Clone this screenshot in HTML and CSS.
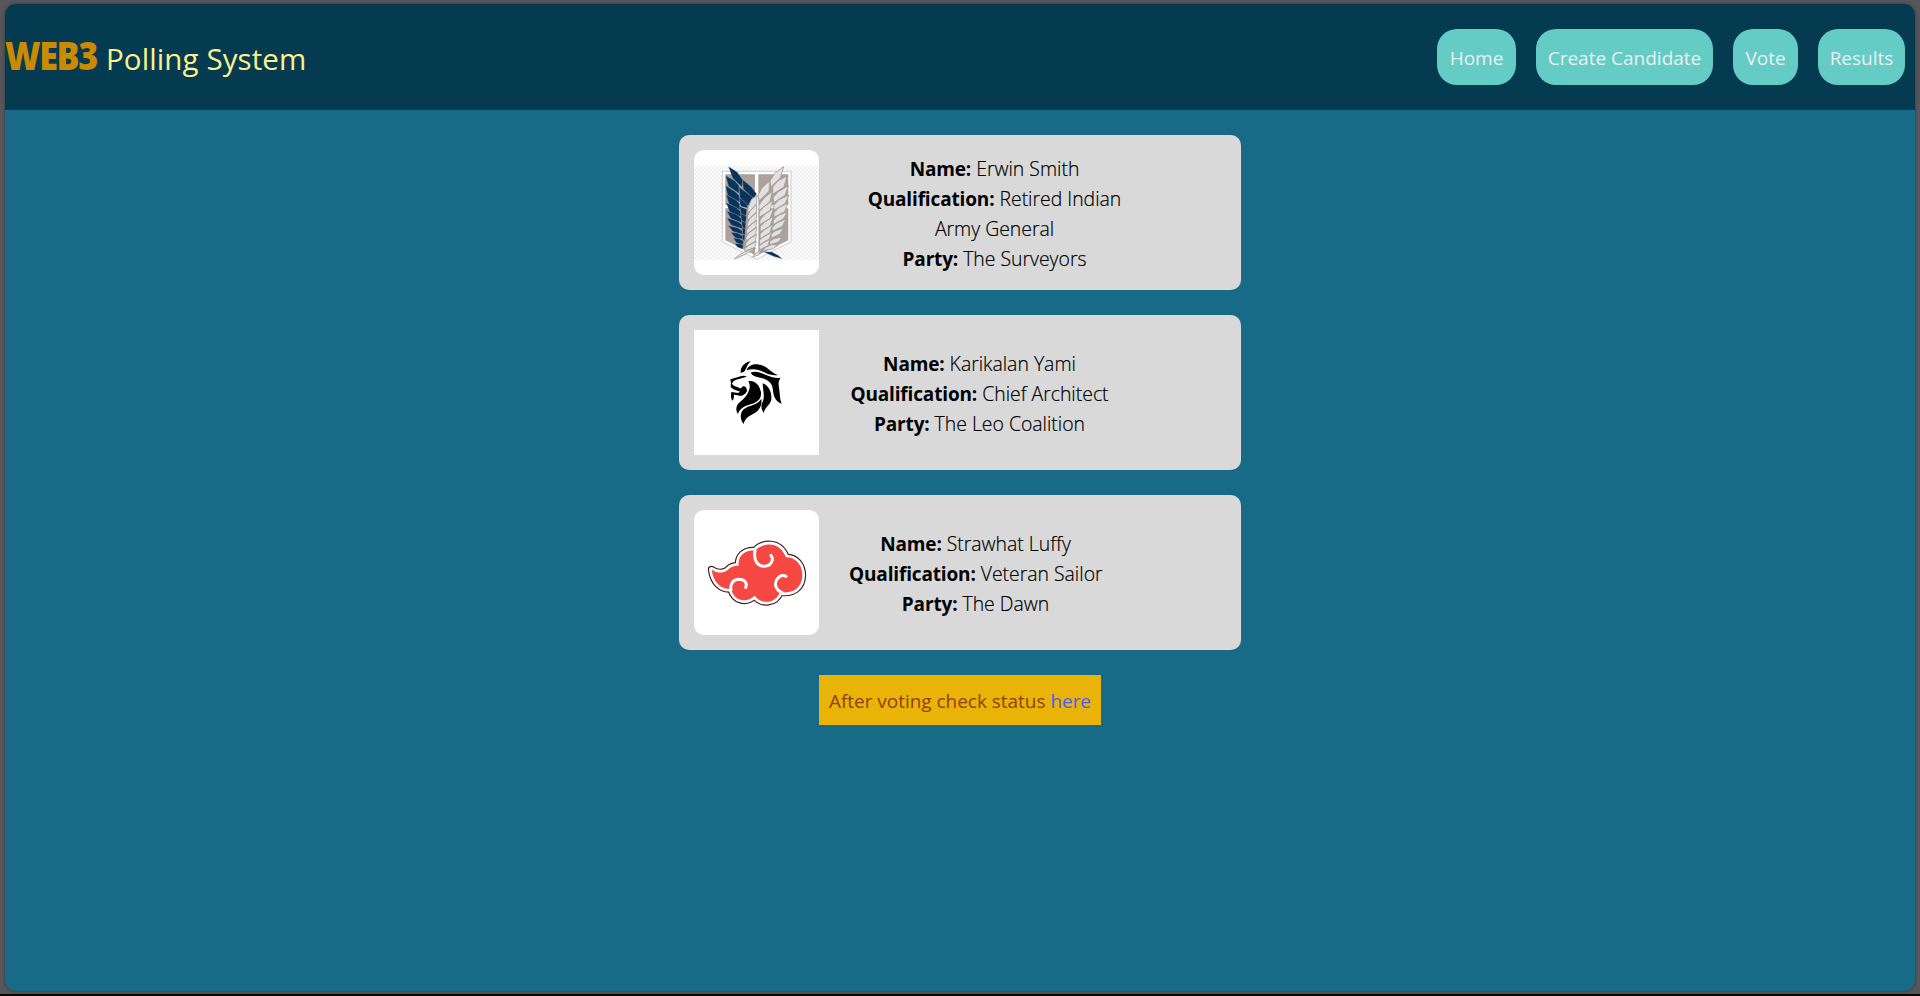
FILE: index.html
```
<!DOCTYPE html>
<html lang="en">
<head>
<meta charset="utf-8">
<title>Web3 Polling System</title>
<link rel="stylesheet" href="styles.css">
</head>
<body>
<div class="app">
  <header class="header">
    <h1 class="brand"><span class="brand-mark">WEB3</span><span class="brand-name">Polling System</span></h1>
    <nav class="nav">
      <a class="nav-link home">Home</a>
      <a class="nav-link create">Create Candidate</a>
      <a class="nav-link vote">Vote</a>
      <a class="nav-link results">Results</a>
    </nav>
  </header>
  <main class="main">
    <article class="card">
      <svg class="logo rounded" viewBox="12 15 375 375">
        <defs>
          <pattern id="check" width="12" height="12" patternUnits="userSpaceOnUse"><path fill="#fff" d="M0 0h12v12H0z"/><path fill="#ededed" d="M0 0h6v6H0zM6 6h6v6H6z"/></pattern>
        </defs>
        <path fill="url(#check)" d="M12 63h375v282H12z"/>
        <path d="M97 79H303V290L200 343 97 290Z" fill="#fff" stroke="#bbb5b2" stroke-width="2"/>
        <path d="M106 88H195V180H106ZM205 88H295V180H205ZM106 190H195V330L106 286ZM205 190H295V286L205 330Z" fill="#aca19d"/>
        <g fill="#06345c" stroke="#8b8c92" stroke-width="1">
          <path d="M116 65L142 82 158 106 156 126 128 99ZM158 104L184 126 200 147 190 160 160 132ZM107 92L134 107 147 122 147 145 116 124ZM147 126L172 145 188 157 174 184 150 157ZM107 122L136 140 148 153 148 171 113 151ZM147 157L170 174 174 190 152 184ZM109 150L137 164 149 177 150 194 117 176ZM149 184L170 193 168 213 153 205ZM109 174L138 187 151 199 153 215 119 200ZM152 205L169 214 167 233 155 227ZM111 199L139 208 153 219 155 233 122 220ZM155 227L167 234 166 252 157 247ZM111 219L141 229 155 238 157 251 124 240ZM157 247L166 253 165 270 158 266ZM115 242L142 248 156 257 158 268 128 259ZM158 268L165 271 163 287 156 281ZM123 262L144 265 158 273 159 283 136 278ZM130 280L147 281 160 288 159 299 140 293ZM135 296L150 296 160 302 157 312 142 306ZM221 320L245 321 264 331 276 341 250 334Z"/>
        </g>
        <g fill="#e1e1e1" stroke="#a49995" stroke-width="2.5">
          <path d="M281 65L256 83 240 107 242 126 271 99ZM240 107L216 128 204 151 208 167 237 139ZM291 93L263 108 248 126 248 148 282 126ZM247 139L223 158 207 180 207 197 240 170ZM296 122L265 140 250 157 250 174 285 151ZM249 166L223 184 208 201 207 217 239 198ZM297 150L267 164 251 181 251 196 285 176ZM251 190L225 207 210 225 209 239 240 221ZM294 174L266 188 252 203 252 217 284 200ZM250 214L226 230 211 244 210 260 240 244ZM292 200L263 212 250 226 249 239 280 222ZM248 237L225 253 210 267 210 281 239 266ZM288 222L260 234 247 247 246 259 277 244ZM245 260L223 273 208 286 209 299 237 285ZM281 250L257 257 243 268 244 279 270 267ZM241 280L220 292 207 304 208 315 234 302ZM277 277L254 280 239 289 240 299 265 291ZM265 301L245 299 227 307 216 317 247 312Z"/>
          <path d="M201 151L184 164 174 188 174 204 199 178ZM200 178L180 198 172 216 173 226 199 202ZM200 202L179 221 171 237 172 247 198 226ZM200 226L178 243 169 258 171 267 198 247ZM200 247L177 263 167 278 170 287 197 268ZM200 268L176 283 166 297 169 306 196 288ZM199 289L176 300 163 313 167 320 194 307ZM198 309L171 315 148 330 133 342 165 328ZM212 315L195 326 188 336 207 329Z"/>
        </g>
      </svg>
      <div class="info info-wide">
        <p><b>Name:</b> Erwin Smith</p>
        <p><b>Qualification:</b> Retired Indian</p>
        <p>Army General</p>
        <p><b>Party:</b> The Surveyors</p>
      </div>
    </article>
    <article class="card">
      <svg class="logo" viewBox="12 15 375 375">
        <path d="M152 144C151 126 162 112 183 109C169 119 171 132 162 140ZM170 136C174 119 196 112 219 122C238 130 246 145 264 150C239 155 222 140 206 135C193 131 180 132 170 136ZM182 143C200 134 218 147 236 153C248 158 262 160 272 158C267 165 265 172 266 180C270 205 269 222 275 236C260 231 251 218 249 197C248 178 240 168 222 161C207 156 187 155 182 143ZM121 163C137 159 147 153 162 152L171 155C154 159 144 162 132 167L126 175C128 182 134 184 144 187C149 190 153 193 158 184C166 181 173 190 170 200C164 211 152 215 143 211L132 209C132 217 131 223 127 227C121 220 123 207 124 201L145 204L150 199C140 197 127 193 122 185L123 174ZM175 169C190 165 203 176 208 187L213 201C215 222 202 231 184 237C161 244 148 252 144 267C136 257 137 241 150 231C165 219 174 208 178 193C181 181 178 175 175 169ZM218 175C235 180 246 201 244 222C242 240 224 246 221 264C210 247 215 237 219 228C225 212 218 194 218 175ZM214 221C218 247 201 262 185 269C170 276 163 287 161 297C150 285 149 265 161 253C176 239 202 243 214 221Z"/>
      </svg>
      <div class="info info-architect">
        <p><b>Name:</b> Karikalan Yami</p>
        <p><b>Qualification:</b> Chief Architect</p>
        <p><b>Party:</b> The Leo Coalition</p>
      </div>
    </article>
    <article class="card">
      <svg class="logo rounded" viewBox="12 15 375 375">
        <defs>
          <path id="cloud" d="M65 194C86 208 107 203 117 191C126 183 135 182 146 182C143 154 163 134 195 137C217 113 268 105 288 157C318 157 337 180 337 211C337 247 310 268 270 261C258 295 214 301 194 272C168 296 132 288 123 251C94 255 70 233 65 194Z"/>
        </defs>
        <g stroke-linejoin="round">
          <use href="#cloud" stroke="#40201c" stroke-width="23"/>
          <use href="#cloud" stroke="#fff" stroke-width="16"/>
          <use href="#cloud" fill="#f54842"/>
        </g>
        <path fill="none" stroke="#fff" stroke-width="9" stroke-linecap="round" d="M195 137C190 166 202 184 224 184C243 183 253 164 243 151M123 254C120 235 130 224 146 223C163 223 173 233 167 247M276 263C253 253 252 231 264 219C271 211 282 209 288 214"/>
      </svg>
      <div class="info info-sailor">
        <p><b>Name:</b> Strawhat Luffy</p>
        <p><b>Qualification:</b> Veteran Sailor</p>
        <p><b>Party:</b> The Dawn</p>
      </div>
    </article>
    <p class="notice">After voting check status <a class="notice-link">here</a></p>
  </main>
</div>
</body>
</html>
```
FILE: styles.css
```
* { box-sizing: border-box; }
body {
  margin: 0;
  height: 996px;
  padding: 4px 5px 5px;
  background: #56565b;
  border-bottom: 2px solid #050505;
  font-family: "Open Sans", "Noto Sans", sans-serif;
  font-size: 19px;
  line-height: 30px;
  overflow: hidden;
}
h1, p { margin: 0; }
.app {
  height: 987px;
  border-radius: 11px;
  overflow: hidden;
  background: #176b87;
  box-shadow: 0 0 3px #333;
}
.header {
  height: 106px;
  display: flex;
  justify-content: space-between;
  align-items: center;
  padding-right: 10px;
  background: #053b50;
}
.brand {
  display: flex;
  align-items: baseline;
  gap: 9px;
  font-size: 29.5px;
  font-weight: 400;
  line-height: 40px;
  white-space: nowrap;
}
.brand-mark {
  width: 92px;
  color: #ca8a04;
  font-family: "Open Sans", sans-serif;
  font-size: 38px;
  font-weight: 800;
  letter-spacing: -1.5px;
  transform: scaleX(0.9);
  transform-origin: left;
}
.brand-name {
  color: #fef08a;
  letter-spacing: 0.1px;
}
.nav { display: flex; gap: 20px; }
.nav-link {
  height: 56px;
  border-radius: 20px;
  background: #64ccc5;
  color: #eee;
  line-height: 58px;
  text-align: center;
  white-space: nowrap;
}
.home { width: 79px; }
.create { width: 177px; }
.vote { width: 65px; }
.results { width: 87px; }
.main {
  display: flex;
  flex-direction: column;
  align-items: center;
  gap: 25px;
  padding-top: 25px;
}
.card {
  width: 562px;
  height: 155px;
  display: flex;
  align-items: center;
  gap: 30px;
  padding: 15px;
  border-radius: 10px;
  background: #d9d9d9;
}
.logo {
  flex: none;
  width: 125px;
  height: 125px;
  background: #fff;
}
.rounded { border-radius: 10px; }
.info {
  padding-top: 2px;
  color: #000;
  font-size: 19.4px;
  font-weight: 300;
  text-align: center;
  white-space: nowrap;
  -webkit-text-stroke: 0.2px #000;
}
.info-wide { width: 291px; }
.info-architect { width: 261px; }
.info-sailor { width: 253px; }
.info b {
  font-size: 19px;
  font-weight: 700;
  letter-spacing: -0.15px;
  -webkit-text-stroke: 0;
}
.notice {
  width: 282px;
  height: 50px;
  background: #eab308;
  color: #92400e;
  letter-spacing: -0.03px;
  line-height: 52px;
  text-align: center;
  white-space: nowrap;
}
.notice-link { color: #4f5fe8; }
```
